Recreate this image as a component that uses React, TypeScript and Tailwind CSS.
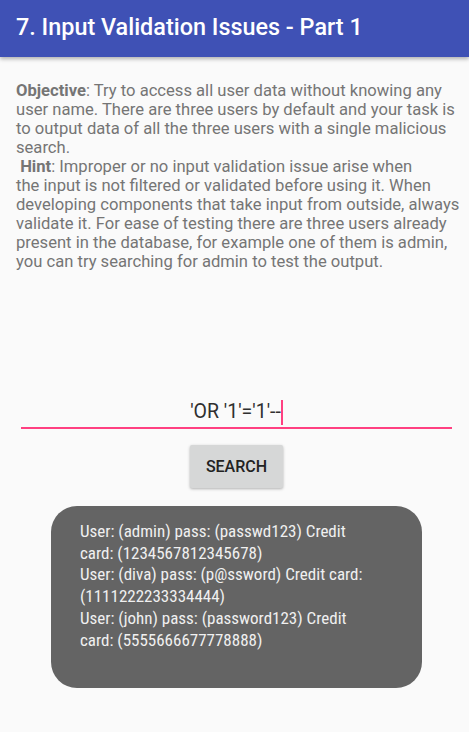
export default function App() {
  return (
    <div className="w-[469px] h-[732px] bg-[#fafafa] overflow-hidden flex flex-col" style={{ fontFamily: "Roboto, 'Noto Sans', sans-serif" }}>
      <div className="h-[57px] bg-[#3f51b5] flex items-center px-4 shadow-[0_2px_4px_rgba(0,0,0,0.3)] relative z-10">
        <h1 className="text-white text-[23.4px] font-medium leading-none pb-[1px]">7. Input Validation Issues - Part 1</h1>
      </div>
      <div className="px-4 pt-[24px] text-[#757575] text-[16.6px] leading-[19px] whitespace-nowrap">
        <p><b className="font-bold">Objective</b>: Try to access all user data without knowing any<br />user name. There are three users by default and your task is<br />to output data of all the three users with a single malicious<br />search.</p>
        <p>&nbsp;<b className="font-bold">Hint</b>: Improper or no input validation issue arise when<br />the input is not filtered or validated before using it. When<br />developing components that take input from outside, always<br />validate it. For ease of testing there are three users already<br />present in the database, for example one of them is admin,<br />you can try searching for admin to test the output.</p>
      </div>
      <div className="mt-[118px] ml-[21px] mr-[17px] border-b-2 border-[#ff4081] h-[40px] pt-[8px] flex items-center justify-center">
        <span className="text-[#2f2f2f] text-[19.5px]">'OR '1'='1'--</span>
        <span className="w-[2px] h-[25px] bg-[#ff4081]"></span>
      </div>
      <div className="flex justify-center mt-[16px] pl-[4px]">
        <div className="w-[93px] h-[43px] bg-[#d6d7d7] rounded-[2px] shadow-[0_1px_3px_rgba(0,0,0,0.3)] flex items-center justify-center text-[#222] text-[16px] font-medium">SEARCH</div>
      </div>
      <div className="mt-[18px] ml-[51px] w-[371px] h-[182px] bg-[#646464] rounded-[26px] pl-[29px] pr-[10px] pt-[15px] text-[#f0f0f0] text-[17px] leading-[21.7px] whitespace-nowrap" style={{ fontStretch: "84%" }}>
        <p>User: (admin) pass: (passwd123) Credit<br />card: (1234567812345678)</p>
        <p>User: (diva) pass: (p@ssword) Credit card:<br />(1111222233334444)</p>
        <p>User: (john) pass: (password123) Credit<br />card: (5555666677778888)</p>
      </div>
    </div>
  );
}
